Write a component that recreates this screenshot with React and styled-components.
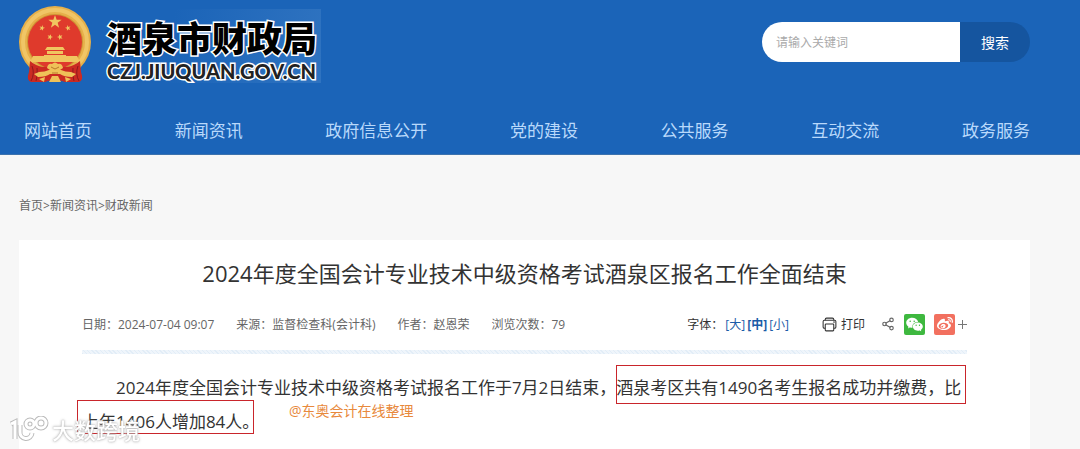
import React from "react";
import styled, { createGlobalStyle } from "styled-components";
import { AiFillWechat } from "react-icons/ai";
import { FaWeibo } from "react-icons/fa";
import { FiShare2 } from "react-icons/fi";
import { IoPrintOutline } from "react-icons/io5";

const navItems = [
  "网站首页",
  "新闻资讯",
  "政府信息公开",
  "党的建设",
  "公共服务",
  "互动交流",
  "政务服务",
];

const star = (cx, cy, r, turn = 0) => {
  const points = [];
  for (let i = 0; i < 10; i++) {
    const radius = i % 2 ? r * 0.4 : r;
    const angle = ((i * 36 - 90 + turn) * Math.PI) / 180;
    points.push(
      `${(cx + radius * Math.cos(angle)).toFixed(2)},${(cy + radius * Math.sin(angle)).toFixed(2)}`
    );
  }
  return points.join(" ");
};

function Emblem() {
  return (
    <EmblemSvg viewBox="0 0 72 77" role="img" aria-label="国徽">
      <circle cx="36" cy="36" r="36" fill="#e6b04a" />
      <circle cx="36" cy="36" r="32" fill="none" stroke="#f0c566" strokeWidth="4" />
      <circle cx="36" cy="36" r="28" fill="#cf9235" />
      <circle cx="36" cy="36" r="27" fill="#df3a2c" />
      <g fill="#f0c660">
        <polygon points={star(36, 16, 7)} />
        <polygon points={star(23, 22, 3, 15)} />
        <polygon points={star(49, 22, 3, -15)} />
        <polygon points={star(31, 31, 3, 20)} />
        <polygon points={star(41, 31, 3, -20)} />
        <path d="M28 41H44L46 44H26Z" />
        <path d="M28 45H44V48H28Z" />
        <path d="M25 49H47V50H58L61 56H11L14 50H25Z" />
      </g>
      <path d="M11 55Q17 60 24 61H48Q55 60 61 55L62 66Q65 74 60 76H46L36 73L26 76H12Q7 74 10 66Z" fill="#cb2a22" />
      <path d="M13 60Q16 68 12 75M18 62Q19 69 17 75M59 60Q56 68 60 75M54 62Q53 69 55 75" fill="none" stroke="#8e1a1c" />
      <g fill="#efc158">
        <path d="M28 62Q29 57 33 58Q36 55 39 58Q43 57 44 62L41 64H31Z" />
        <path d="M20 66Q26 66 30 64H42Q46 66 52 66L57 68L53 71Q45 71 41 68H31Q27 71 19 71L15 68Z" />
        <path d="M20 73L26 71L25 76Z M52 73L46 71L47 76Z M30 76L33 70H39L42 76Z" />
      </g>
      <path d="M32 61L36 63L40 61M33 67H39" fill="none" stroke="#b9772a" />
    </EmblemSvg>
  );
}

function WatermarkMark({ stroke, strokeWidth }) {
  return (
    <g stroke={stroke} strokeWidth={strokeWidth}>
      <path d="M1 7L5 5V22" />
      <path d="M10 8V15A6 6 0 0 0 22 16" />
      <circle cx="20" cy="7" r="4" />
      <circle cx="31" cy="6" r="5" />
    </g>
  );
}

function App() {
  return (
    <>
      <GlobalStyle />
      <Header>
        <Container>
          <Top>
            <Brand href="#">
              <Emblem />
              <BrandName>
                <strong>酒泉市财政局</strong>
                <span>CZJ.JIUQUAN.GOV.CN</span>
              </BrandName>
            </Brand>
            <Search onSubmit={(e) => e.preventDefault()}>
              <input type="text" placeholder="请输入关键词" aria-label="请输入关键词" />
              <button type="submit">搜索</button>
            </Search>
          </Top>
          <Nav>
            {navItems.map((item) => (
              <a href="#" key={item}>
                {item}
              </a>
            ))}
          </Nav>
        </Container>
      </Header>
      <Container>
        <Crumbs>
          <a href="#">首页</a>&gt;<a href="#">新闻资讯</a>&gt;<a href="#">财政新闻</a>
        </Crumbs>
        <Article>
          <Title>2024年度全国会计专业技术中级资格考试酒泉区报名工作全面结束</Title>
          <Meta>
            <MetaGroup>
              <span>日期：2024-07-04 09:07</span>
              <span>来源：监督检查科(会计科)</span>
              <span>作者：赵恩荣</span>
              <span>浏览次数：79</span>
            </MetaGroup>
            <Tools>
              <FontSizes>
                字体：
                <SizeButton>[大]</SizeButton>
                <SizeButton $active>[中]</SizeButton>
                <SizeButton>[小]</SizeButton>
              </FontSizes>
              <PrintButton>
                <IoPrintOutline size={17} />
                打印
              </PrintButton>
              <Share>
                <FiShare2 size={14} color="#666" />
                <ShareButton $color="#3eb83f" aria-label="微信">
                  <AiFillWechat size={19} />
                </ShareButton>
                <ShareButton $color="#f2705f" aria-label="微博">
                  <FaWeibo size={16} />
                </ShareButton>
                <MoreButton aria-label="更多">
                  <svg width="9" height="9" viewBox="0 0 9 9">
                    <path d="M4.5 0V9M0 4.5H9" stroke="#777" />
                  </svg>
                </MoreButton>
              </Share>
            </Tools>
          </Meta>
          <Divider />
          <Body>
            2024年度全国会计专业技术中级资格考试报名工作于7月2日结束，
            <Marked>酒泉考区共有1490名考生报名成功并缴费，比</Marked>
            <Marked $second>上年1406人增加84人。</Marked>
            <Credit>@东奥会计在线整理</Credit>
          </Body>
        </Article>
      </Container>
      <Watermark>
        <svg width="40" height="28" viewBox="-1 -1 40 28" fill="none">
          <WatermarkMark stroke="#bbb" strokeWidth="5" />
          <WatermarkMark stroke="#fff" strokeWidth="3" />
        </svg>
        大数跨境
      </Watermark>
    </>
  );
}

const GlobalStyle = createGlobalStyle`
  * {
    box-sizing: border-box;
  }
  body {
    margin: 0;
    background: #f7f7f7;
    color: #333;
    font-family: "Open Sans", "Noto Sans CJK SC", sans-serif;
    font-size: 12px;
  }
  a {
    color: inherit;
    text-decoration: none;
  }
  button, input {
    border: 0;
    padding: 0;
    background: none;
    color: inherit;
    font: inherit;
  }
  button {
    cursor: pointer;
  }
`;

const Container = styled.div`
  padding: 0 50px 0 19px;
`;

const Header = styled.header`
  background: #1b64b8;
  border-bottom: 1px solid #3c72ad;
`;

const Top = styled.div`
  display: flex;
  justify-content: space-between;
  align-items: flex-start;
  height: 106px;
`;

const Brand = styled.a`
  display: flex;
  gap: 16px;
  padding-top: 6px;
`;

const EmblemSvg = styled.svg`
  width: 72px;
  height: 77px;
`;

const BrandName = styled.div`
  display: flex;
  flex-direction: column;
  margin-top: 3px;
  padding-top: 11px;
  width: 214px;
  height: 74px;
  background: linear-gradient(100deg, #1b64b8 30%, #2f73c0);
  white-space: nowrap;
  strong, span {
    -webkit-text-stroke: 3px #fff;
    paint-order: stroke fill;
  }
  strong {
    color: #000;
    font-size: 35px;
    font-weight: 900;
    line-height: 38px;
  }
  span {
    color: #222;
    font-family: Lato, sans-serif;
    font-size: 20px;
    font-weight: 900;
    line-height: 26px;
  }
`;

const Search = styled.form`
  display: flex;
  margin-top: 22px;
  height: 40px;
  border-radius: 20px;
  overflow: hidden;
  input {
    width: 198px;
    padding: 0 14px;
    background: #fff;
    outline: none;
  }
  input::placeholder {
    color: #aaa;
  }
  button {
    width: 70px;
    background: #15559f;
    color: #fff;
    font-size: 14px;
  }
`;

const Nav = styled.nav`
  display: flex;
  justify-content: space-between;
  padding-left: 5px;
  height: 48px;
  color: #b9d9fb;
  font-size: 17px;
  line-height: 50px;
`;

const Crumbs = styled.nav`
  padding: 40px 0 24px;
  color: #666;
  line-height: 21px;
`;

const Article = styled.article`
  padding: 16px 63px 10px;
  background: #fff;
`;

const Title = styled.h1`
  margin: 0;
  font-size: 22px;
  font-weight: 400;
  line-height: 34px;
  text-align: center;
`;

const Meta = styled.div`
  display: flex;
  justify-content: space-between;
  align-items: center;
  margin-top: 22px;
  height: 24px;
  white-space: nowrap;
`;

const MetaGroup = styled.div`
  display: flex;
  gap: 22px;
  color: #666;
`;

const Tools = styled.div`
  display: flex;
  align-items: center;
`;

const FontSizes = styled.div`
  display: flex;
  gap: 2px;
`;

const SizeButton = styled.button`
  color: #1b5ca8;
  font-weight: ${(props) => (props.$active ? 700 : 400)};
`;

const PrintButton = styled.button`
  display: flex;
  align-items: center;
  gap: 3px;
  margin: 0 16px 0 32px;
`;

const Share = styled.div`
  display: flex;
  align-items: center;
  gap: 9px;
`;

const ShareButton = styled.button`
  display: grid;
  place-items: center;
  width: 21px;
  height: 21px;
  border-radius: 2px;
  background: ${(props) => props.$color};
  color: #fff;
`;

const MoreButton = styled.button`
  display: flex;
  margin-left: -6px;
`;

const Divider = styled.div`
  margin-top: 14px;
  height: 4px;
  background: repeating-linear-gradient(45deg, #e2edf7 0 1px, #eff5fb 1px 3px);
`;

const Body = styled.p`
  position: relative;
  margin: 17px 0 0;
  font-size: 17px;
  line-height: 34px;
  text-indent: 34px;
`;

const Marked = styled.span`
  display: inline-block;
  position: relative;
  text-indent: 0;
  &::after {
    content: "";
    position: absolute;
    inset: ${(props) => (props.$second ? "-5px 5px 5px -5px" : "-6px -5px 1px 0")};
    border: 1px solid #c9252b;
  }
`;

const Credit = styled.span`
  position: absolute;
  left: 207px;
  top: 30px;
  color: #e8893c;
  font-size: 14px;
  line-height: 20px;
  text-indent: 0;
`;

const Watermark = styled.div`
  position: fixed;
  left: 9px;
  bottom: 4px;
  display: flex;
  align-items: center;
  gap: 3px;
  color: #fff;
  font-size: 22px;
  font-weight: 500;
  line-height: 30px;
  text-shadow: 0 0 3px #aaa, 0 0 1px #aaa;
`;

export default App;
